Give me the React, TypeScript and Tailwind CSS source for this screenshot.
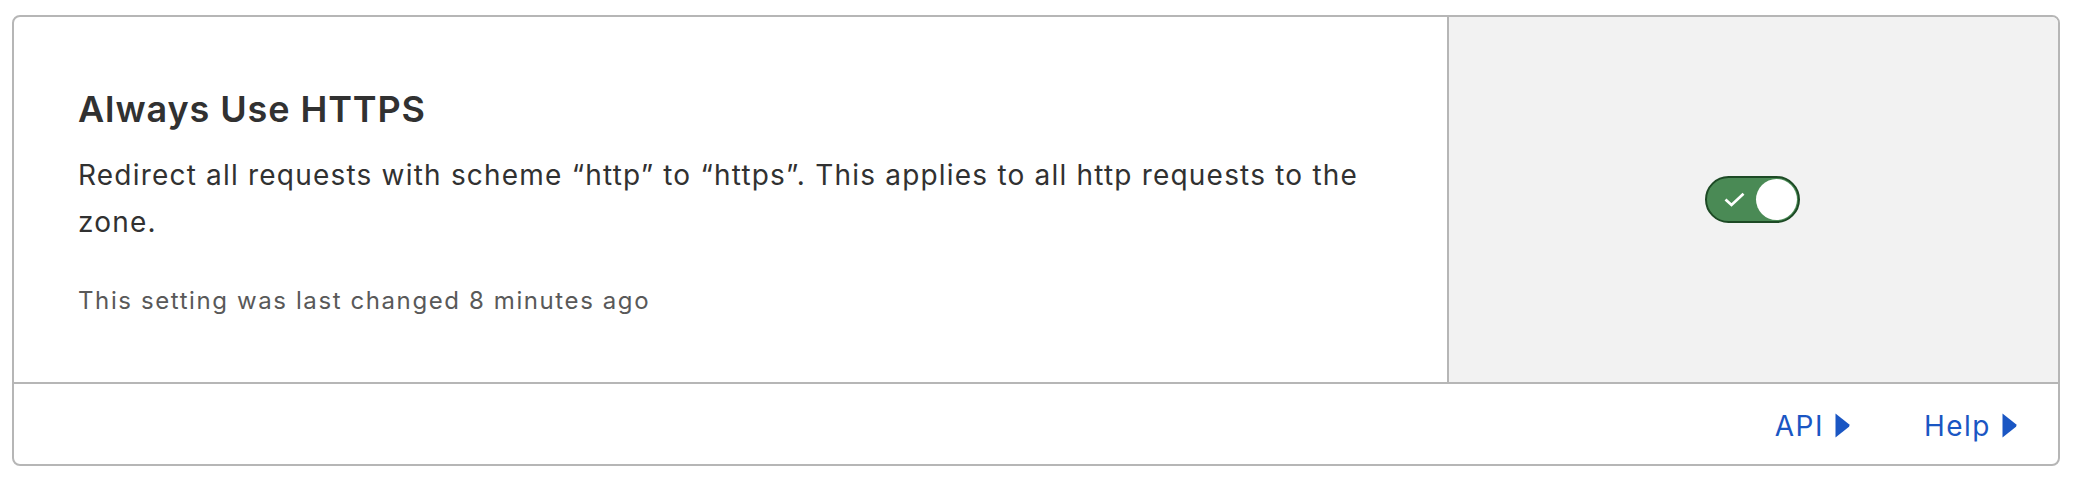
import React from "react";

function Caret() {
  return (
    <svg width="15" height="25" viewBox="0 0 15 25" className="block">
      <path d="M0.5 0.5 L14 11.3 Q15 12.5 14 13.7 L0.5 24.5 Z" fill="#1a56c3" />
    </svg>
  );
}

export default function App() {
  return (
    <div className="min-h-[494px] bg-white pt-[15px] pl-[12px]" style={{ fontFamily: "Inter, 'Noto Sans', sans-serif" }}>
      <div className="w-[2048px] h-[451px] border-2 border-[#b6b6b6] rounded-[8px] overflow-hidden flex flex-col">
        <div className="flex h-[365px]">
          <div className="flex-1 px-[64px] pt-[70px] flex flex-col">
            <h1 className="text-[36px] leading-[44px] font-semibold tracking-[0.9px] text-[#313131]">Always Use HTTPS</h1>
            <p className="mt-[21px] text-[28px] leading-[47px] tracking-[1.2px] text-[#313131]">
              Redirect all requests with scheme “http” to “https”. This applies to all http requests to the zone.
            </p>
            <p className="mt-[39px] text-[24px] leading-[32px] tracking-[1.6px] text-[#595959]">This setting was last changed 8 minutes ago</p>
          </div>
          <div className="w-[611px] bg-[#f2f2f2] border-l-2 border-[#b6b6b6] flex items-center justify-center">
            <div className="relative w-[95px] h-[47px] rounded-full bg-[#4a8a55] border-2 border-[#1d4a25] -ml-[2px]">
              <svg width="21" height="15" viewBox="0 0 21 15" className="absolute left-[17px] top-[14px]">
                <path d="M1.5 7.5 L7.5 13 L19.5 1.8" fill="none" stroke="white" strokeWidth="2.7" />
              </svg>
              <div className="absolute right-[1px] top-[1px] w-[41px] h-[41px] rounded-full bg-white" />
            </div>
          </div>
        </div>
        <div className="h-[80px] border-t-2 border-[#b6b6b6] pt-[5px] flex items-center justify-end pr-[41px] text-[28px] tracking-[1.5px] text-[#1a56c3]">
          <a className="flex items-center gap-[11px]">
            <span>API</span>
            <Caret />
          </a>
          <a className="flex items-center gap-[11px] ml-[74px]">
            <span>Help</span>
            <Caret />
          </a>
        </div>
      </div>
    </div>
  );
}
